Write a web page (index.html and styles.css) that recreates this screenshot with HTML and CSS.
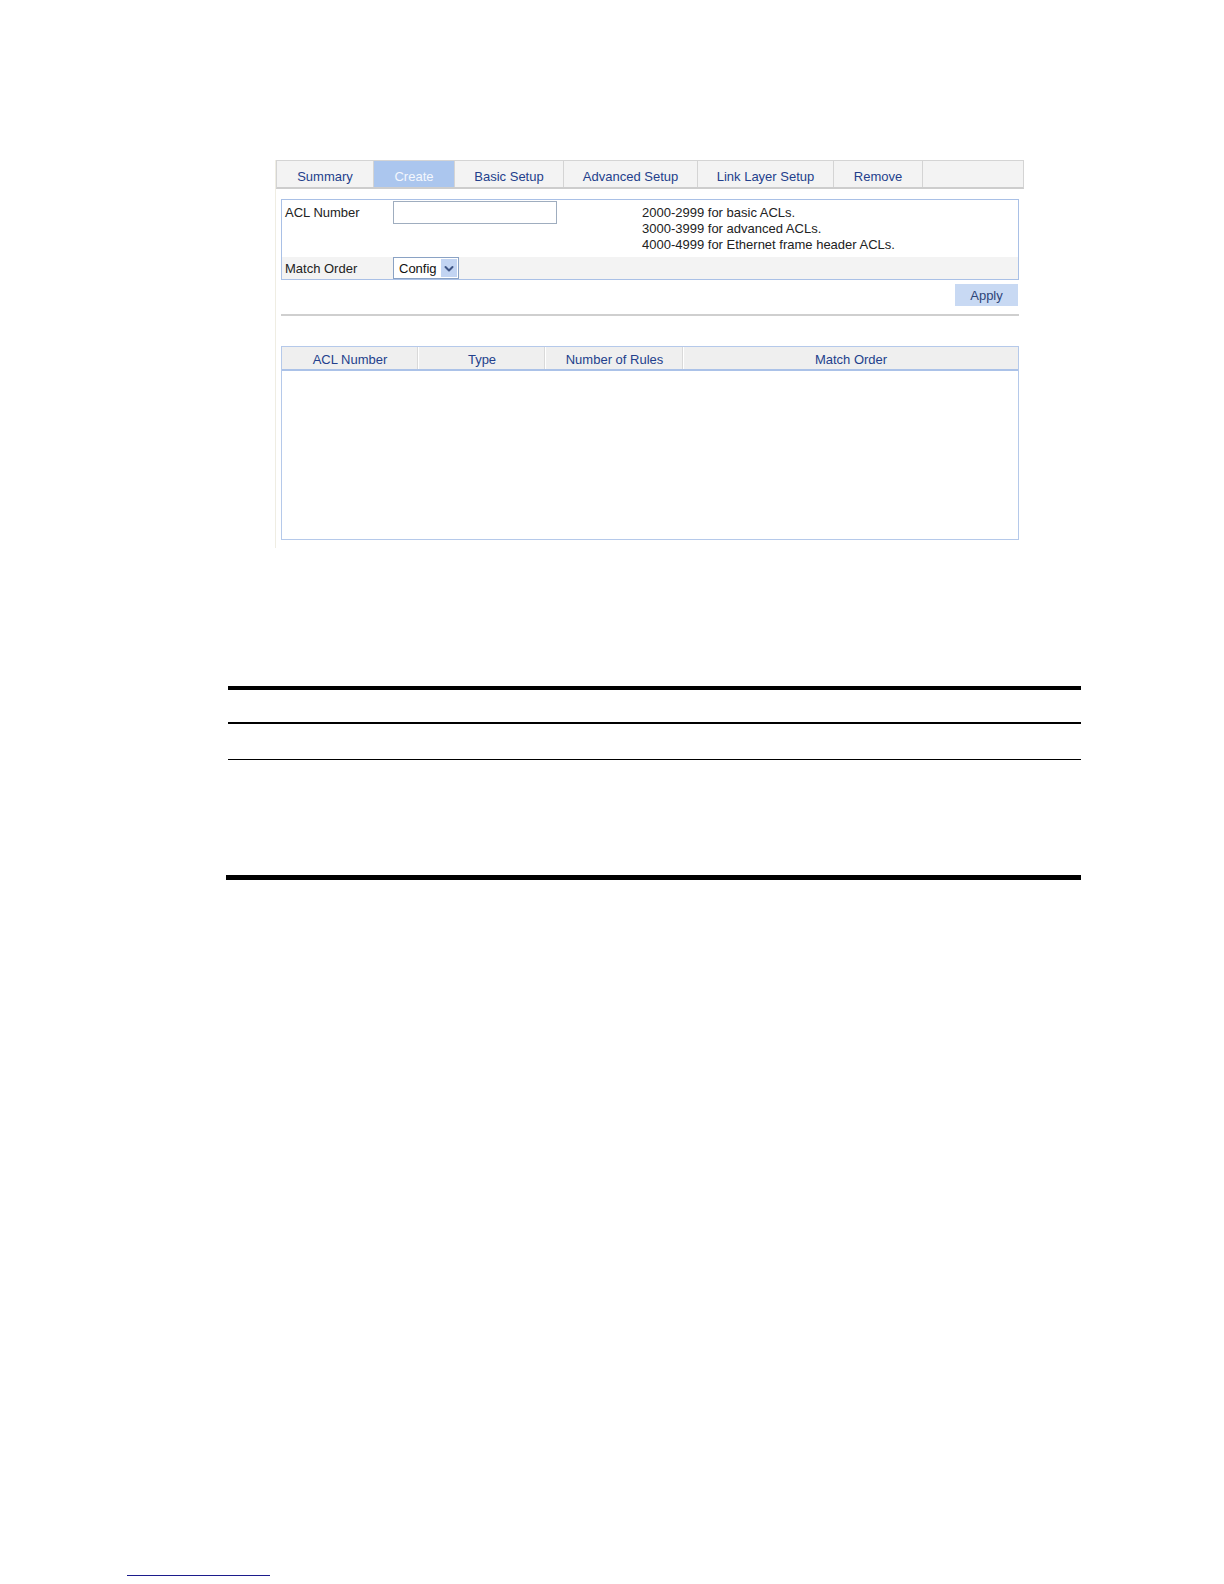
FILE: index.html
```html
<!DOCTYPE html>
<html lang="en">
<head>
<meta charset="utf-8">
<title>ACL Create</title>
<link rel="stylesheet" href="styles.css">
</head>
<body>
<div class="page">
  <div class="ui">
    <div class="tabs">
      <div class="tab t-summary">Summary</div>
      <div class="tab t-create active">Create</div>
      <div class="tab t-basic">Basic Setup</div>
      <div class="tab t-adv">Advanced Setup</div>
      <div class="tab t-link">Link Layer Setup</div>
      <div class="tab t-remove">Remove</div>
      <div class="tab t-blank"></div>
    </div>

    <div class="form">
      <div class="row row-acl">
        <div class="label">ACL Number</div>
        <div class="field"><span class="input"></span></div>
        <div class="desc">
          <div>2000-2999 for basic ACLs.</div>
          <div>3000-3999 for advanced ACLs.</div>
          <div>4000-4999 for Ethernet frame header ACLs.</div>
        </div>
      </div>
      <div class="row row-order">
        <div class="label">Match Order</div>
        <div class="field">
          <span class="select">
            <span class="select-text">Config</span>
            <span class="select-btn">
              <svg width="16" height="19" viewBox="0 0 16 19" aria-hidden="true">
                <path d="M4.5 8 L8 11.5 L11.5 8" fill="none" stroke="#3f5585" stroke-width="2" stroke-linecap="round" stroke-linejoin="round"/>
              </svg>
            </span>
          </span>
        </div>
      </div>
    </div>

    <div class="actions"><span class="btn">Apply</span></div>
    <div class="sep"></div>

    <div class="grid">
      <div class="grid-head">
        <div class="th c1">ACL Number</div>
        <div class="th c2">Type</div>
        <div class="th c3">Number of Rules</div>
        <div class="th c4">Match Order</div>
      </div>
      <div class="grid-body"></div>
    </div>
  </div>

  <div class="doc">
    <div class="doc-row r1"></div>
    <div class="doc-row r2"></div>
    <div class="doc-row r3"></div>
  </div>
  <div class="doc-bottom"></div>

  <div class="footer-line"></div>
</div>
</body>
</html>
```

FILE: styles.css
```css
html, body {
  margin: 0;
  padding: 0;
  background: #ffffff;
}

body {
  font-family: "Liberation Sans", Arial, sans-serif;
  font-size: 13px;
  line-height: 16px;
  color: #222222;
}

.page {
  padding-top: 160px;
  width: 1224px;
  height: 1584px;
  box-sizing: border-box;
  overflow: hidden;
}

/* ---------- web UI panel ---------- */
.ui {
  margin-left: 275px;
  width: 748px;
  border-left: 1px solid #efede3;
  padding-bottom: 8px;
}

.tabs {
  display: flex;
  height: 29px;
  box-sizing: border-box;
  background: #f3f3f3;
  border-top: 1px solid #d4d4d4;
  border-bottom: 2px solid #cdcdcd;
  border-left: 1px solid #d4d4d4;
  border-right: 1px solid #d4d4d4;
}

.tab {
  box-sizing: border-box;
  border-right: 1px solid #d4d4d4;
  padding-top: 8px;
  text-align: center;
  color: #233f8c;
  white-space: nowrap;
}

.t-summary { width: 97px; }
.t-create { width: 81px; }
.t-basic { width: 109px; }
.t-adv { width: 134px; }
.t-link { width: 136px; }
.t-remove { width: 89px; }
.t-blank { flex: 1; border-right: none; }

.tab.active {
  background: #abc6ee;
  color: #f4f7fd;
}

.form {
  margin: 10px 5px 0 5px;
  border: 1px solid #a9c0e6;
}

.row {
  display: flex;
}

.row-acl {
  height: 57px;
}

.row-order {
  height: 22px;
  background: #f3f3f3;
  align-items: center;
}

.label {
  width: 108px;
  padding-left: 3px;
  flex: none;
}

.row-acl .label {
  padding-top: 5px;
}

.row-order .label {
  padding-top: 2px;
}

.field {
  flex: none;
}

.input {
  display: block;
  margin-top: 1px;
  width: 164px;
  height: 23px;
  box-sizing: border-box;
  border: 1px solid #9fadbf;
  background: #ffffff;
}

.desc {
  margin-left: 85px;
  padding-top: 5px;
}

.select {
  display: flex;
  align-items: center;
  width: 66px;
  height: 22px;
  box-sizing: border-box;
  border: 1px solid #8aa2c4;
  background: #ffffff;
}

.select-text {
  flex: 1;
  padding-left: 5px;
  padding-top: 1px;
  color: #111111;
}

.select-btn {
  display: block;
  width: 16px;
  height: 18px;
  margin-right: 1px;
  background: #c2d4f2;
}

.select-btn svg {
  display: block;
}

.actions {
  display: flex;
  justify-content: flex-end;
  margin-top: 4px;
  padding-right: 6px;
}

.btn {
  display: block;
  width: 63px;
  height: 22px;
  box-sizing: border-box;
  padding-top: 4px;
  text-align: center;
  background: #c8d9f3;
  color: #2d4478;
}

.sep {
  margin: 8px 5px 0 5px;
  height: 2px;
  background: #cfcfcf;
}

.grid {
  margin: 30px 5px 0 5px;
  border: 1px solid #b5c9ea;
}

.grid-head {
  display: flex;
  background: #efefef;
  border-bottom: 2px solid #abc2e8;
  height: 24px;
  box-sizing: border-box;
}

.th {
  box-sizing: border-box;
  padding-top: 5px;
  text-align: center;
  color: #233f8c;
  border-right: 1px solid #ffffff;
  box-shadow: inset -1px 0 0 #d9d9d9;
}

.c1 { width: 137px; }
.c2 { width: 127px; }
.c3 { width: 138px; }
.c4 { flex: 1; border-right: none; box-shadow: none; }

.grid-body {
  height: 168px;
  background: #ffffff;
}

/* ---------- document table lines ---------- */
.doc {
  margin-top: 138px;
  margin-left: 228px;
  width: 853px;
  border-top: 4px solid #000000;
}

.doc-row.r1 {
  height: 32px;
  border-bottom: 2px solid #000000;
}

.doc-row.r2 {
  height: 35px;
  border-bottom: 1px solid #000000;
}

.doc-row.r3 {
  height: 115px;
}

.doc-bottom {
  margin-left: 226px;
  width: 855px;
  height: 5px;
  background: #000000;
}

.footer-line {
  margin-top: 695px;
  margin-left: 127px;
  width: 143px;
  height: 1px;
  background: #1c1c8c;
}
```
